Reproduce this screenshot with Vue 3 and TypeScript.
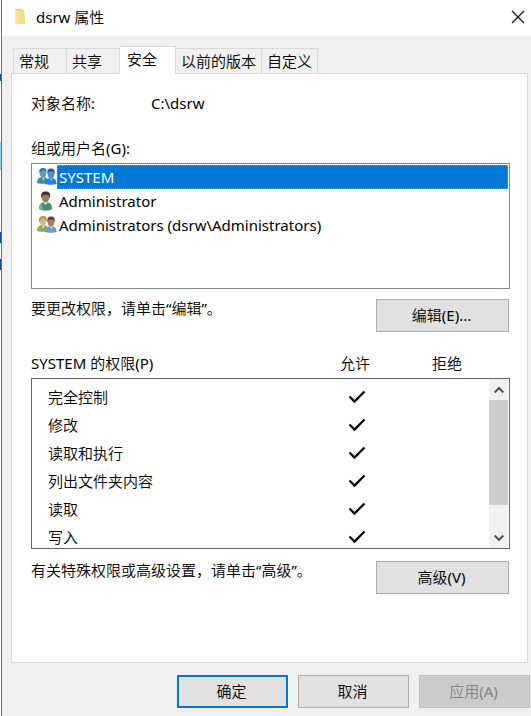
<script setup lang="ts">
import { ref } from 'vue'

interface Principal {
  name: string
  kind: 'group' | 'user' | 'mixed'
}

interface Permission {
  name: string
  allow: boolean
  deny: boolean
}

const tabs: string[] = ['常规', '共享', '安全', '以前的版本', '自定义']
const activeTab = ref('安全')

const principals: Principal[] = [
  { name: 'SYSTEM', kind: 'group' },
  { name: 'Administrator', kind: 'user' },
  { name: 'Administrators (dsrw\\Administrators)', kind: 'mixed' },
]
const selected = ref('SYSTEM')

const permissions: Permission[] = ['完全控制', '修改', '读取和执行', '列出文件夹内容', '读取', '写入'].map(
  (name) => ({ name, allow: true, deny: false }),
)
</script>

<template>
  <div class="desktop">
    <div class="behind"></div>
    <main class="window">
      <header class="titlebar">
        <svg class="folder" width="12" height="18" viewBox="0 0 12 18" aria-hidden="true">
          <path d="M1 1h6l1 1h2v13H1z" fill="#f3cf6b" />
          <path d="M1 1l4 2v13l-4-1z" fill="#fbe29a" />
          <path d="M5 4l2-1h3l1 8v5H5z" fill="#f8dc86" />
        </svg>
        <h1 class="title">dsrw 属性</h1>
        <button class="close" type="button" aria-label="关闭">
          <svg width="14" height="14" viewBox="0 0 14 14" aria-hidden="true">
            <path d="M1 1l12 12M13 1L1 13" stroke="#111" stroke-width="1.2" fill="none" />
          </svg>
        </button>
      </header>

      <nav class="tabs" role="tablist">
        <button
          v-for="tab in tabs"
          :key="tab"
          type="button"
          role="tab"
          class="tab"
          :class="{ active: tab === activeTab }"
          :aria-selected="tab === activeTab"
          @click="activeTab = tab"
        >{{ tab }}</button>
      </nav>

      <section class="panel">
        <div class="object">
          <span class="object-label">对象名称:</span>
          <span>C:\dsrw</span>
        </div>

        <div id="principals-label" class="caption">组或用户名(G):</div>
        <div class="principals" role="listbox" aria-labelledby="principals-label">
          <button
            v-for="p in principals"
            :key="p.name"
            type="button"
            role="option"
            class="principal"
            :class="{ selected: p.name === selected }"
            :aria-selected="p.name === selected"
            @click="selected = p.name"
          >
            <svg v-if="p.kind === 'group'" class="person" width="20" height="20" viewBox="0 0 20 20" aria-hidden="true">
              <path d="M0 16c0-4 2-6 6-6s5 2 5 6c-2 1-9 1-11 0z" fill="#3f8f8e" />
              <ellipse cx="6" cy="6" rx="3.400" ry="4.200" fill="#5b9fc0" />
              <path d="M2.500 6c-.8-3.500 1-5 3.500-5s4 1.500 3.700 4L8 3.500 4.500 4z" fill="#37758f" />
              <path d="M8 17c0-4 2-6 6-6s5.500 2 5.500 6c-2 1-9 1-11.500 0z" fill="#2385df" />
              <ellipse cx="14" cy="7" rx="3.400" ry="4.200" fill="#4d8fd0" />
              <path d="M10.500 7c-.6-4 1-5.500 3.500-5.500S18.500 3 17.500 7L16 4.500l-4 .3z" fill="#285d8c" />
              <path d="M5 10.500l1 3 2-2.500z" fill="#b2dbed" />
              <path d="M13 11.500l1 2.500 2-2.500z" fill="#8fc5f7" />
            </svg>
            <svg v-else-if="p.kind === 'user'" class="person" width="20" height="20" viewBox="0 0 20 20" aria-hidden="true">
              <path d="M2 18c0-5 2-7 6-7 5 0 7 2 7 7-3 2-10 2-13 0z" fill="#3f9167" />
              <path d="M6 11l2.500 3L11 11l-2-2z" fill="#e4ede2" />
              <ellipse cx="8.500" cy="6.500" rx="3.800" ry="5" fill="#a7775c" />
              <path d="M4.500 7C3.500 2.500 5 .5 8.500.5S14 2 12.800 7.500L11.500 4 6 4z" fill="#40312c" />
              <path d="M2 18c0-4 1-5 3-6l1 7z" fill="#70b489" />
            </svg>
            <svg v-else class="person" width="20" height="20" viewBox="0 0 20 20" aria-hidden="true">
              <path d="M0 16c0-4 2-6 6-6s5 2 5 6c-2 1-9 1-11 0z" fill="#8aaf4b" />
              <ellipse cx="6" cy="6" rx="3.400" ry="4.200" fill="#dfb98d" />
              <path d="M2 8C1.500 3 2.500 1 6 1s4.300 2 3.700 5L7.500 3.500 4.500 4z" fill="#b79d54" />
              <path d="M8 17c0-4 2-6 6-6s5.500 2 5.500 6c-2 1-9 1-11.500 0z" fill="#7299bd" />
              <ellipse cx="14" cy="7" rx="3.400" ry="4.200" fill="#ae7e66" />
              <path d="M10.500 7c-.6-4 1-5.500 3.500-5.500S18.500 3 17.500 7L16 4.500l-4 .3z" fill="#584139" />
              <path d="M5 10.500l1 3 2-2.500z" fill="#e4edc9" />
              <path d="M13 11.500l1 2.500 2-2.500z" fill="#dce9f4" />
            </svg>
            <span class="principal-name">{{ p.name }}</span>
          </button>
        </div>

        <div class="action">
          <p class="hint">要更改权限，请单击“编辑”。</p>
          <button class="btn wide" type="button">编辑(E)...</button>
        </div>

        <div class="perm-head">
          <span id="perm-label">{{ selected }} 的权限(P)</span>
          <span class="col">允许</span>
          <span class="col">拒绝</span>
        </div>
        <div class="perm-box">
          <table class="perms" aria-labelledby="perm-label">
            <tbody>
              <tr v-for="perm in permissions" :key="perm.name">
                <th scope="row">{{ perm.name }}</th>
                <td v-for="(on, i) in [perm.allow, perm.deny]" :key="i">
                  <svg v-if="on" class="check" width="18" height="14" viewBox="0 0 18 14" role="img" aria-label="✓">
                    <path d="M1.500 6.500L6.500 11.500L16.500 1.500" fill="none" stroke="#000" stroke-width="2.300" />
                  </svg>
                </td>
              </tr>
            </tbody>
          </table>
          <div class="scrollbar">
            <button class="arrow" type="button" aria-label="向上滚动">
              <svg width="10" height="8" viewBox="0 0 10 8" aria-hidden="true">
                <path d="M.7 6.500L5 2l4.300 4.500" fill="none" stroke="#505050" stroke-width="2" />
              </svg>
            </button>
            <div class="track"><div class="thumb"></div></div>
            <button class="arrow" type="button" aria-label="向下滚动">
              <svg width="10" height="8" viewBox="0 0 10 8" aria-hidden="true">
                <path d="M.7 1.500L5 6l4.300-4.500" fill="none" stroke="#505050" stroke-width="2" />
              </svg>
            </button>
          </div>
        </div>

        <div class="action advanced">
          <p class="hint">有关特殊权限或高级设置，请单击“高级”。</p>
          <button class="btn wide" type="button">高级(V)</button>
        </div>
      </section>

      <footer class="footer">
        <button class="btn primary" type="button">确定</button>
        <button class="btn" type="button">取消</button>
        <button class="btn" type="button" disabled>应用(A)</button>
      </footer>
    </main>
  </div>
</template>

<style>
body {
  margin: 0;
  background: #f0f0f0;
}
</style>

<style scoped>
.desktop {
  display: flex;
  min-height: 100vh;
  overflow: hidden;
  font: 15px/18px "Noto Sans", "Noto Sans CJK SC DemiLight", "Noto Sans CJK SC", sans-serif;
  color: #000;
}
.desktop *,
.desktop {
  box-sizing: border-box;
}
button {
  font: inherit;
  color: inherit;
  padding: 0;
  border: 0;
  background: none;
}
.behind {
  flex: 0 0 1px;
  background: linear-gradient(
    #fff 74px, #104a9a 74px 81px, #fff 81px 142px, #9bd0ee 142px 170px, #fff 170px 232px,
    #0b49a0 232px 243px, #fff 243px 259px, #0b49a0 259px 270px, #fff 270px
  );
}
.window {
  flex: 1;
  min-width: 0;
  display: flex;
  flex-direction: column;
  border-left: 1px solid #3a7ca5;
  background: #f0f0f0;
}
.titlebar {
  display: flex;
  align-items: center;
  height: 36px;
  padding: 0 6px 2px 12px;
  background: #fff;
}
.title {
  flex: 1;
  margin: 0 0 0 10px;
  font: inherit;
}
.close {
  display: flex;
}
.tabs {
  display: flex;
  align-items: flex-end;
  height: 37px;
  padding-left: 11px;
}
.tab {
  height: 25px;
  padding: 0 5px;
  border: 1px solid #dadada;
  border-bottom: 0;
  border-left-width: 0;
  white-space: nowrap;
  text-align: left;
  min-width: 53px;
}
.tab:first-child {
  min-width: 54px;
  border-left-width: 1px;
}
.tab.active {
  z-index: 1;
  height: 28px;
  min-width: 56px;
  margin-bottom: -1px;
  padding: 0 7px 3px;
  background: #fff;
}
.panel {
  flex: 1;
  margin: 0 3px 0 9px;
  padding: 20px 17px 0 19px;
  background: #fff;
  border: 1px solid #d9d9d9;
}
.object {
  display: flex;
}
.object-label {
  width: 120px;
}
.caption {
  margin-top: 27px;
}
.principals {
  height: 126px;
  margin-top: 6px;
  padding: 1px;
  border: 1px solid #828790;
}
.principal {
  display: flex;
  align-items: center;
  width: 100%;
  height: 24px;
  padding-left: 4px;
  text-align: left;
}
.person {
  flex: none;
}
.principal-name {
  flex: 1;
  height: 24px;
  padding-left: 1px;
  border: 1px solid transparent;
  line-height: 22px;
}
.selected .principal-name {
  background: #0078d7;
  border: 1px dotted #c88a4a;
  color: #fff;
}
.action {
  display: flex;
  justify-content: space-between;
  align-items: flex-start;
  margin-top: 10px;
}
.hint {
  margin: 0;
}
.btn {
  width: 111px;
  height: 33px;
  padding: 0 2px 2px 0;
  background: #e1e1e1;
  border: 1px solid #adadad;
}
.btn.wide {
  width: 133px;
  margin-right: 1px;
}
.btn.primary {
  border: 2px solid #0078d7;
}
.btn:disabled {
  background: #ccc;
  border-color: #bfbfbf;
  color: #838383;
}
.perm-head {
  display: grid;
  grid-template-columns: 1fr 92px 92px;
  margin-top: 22px;
  padding-right: 17px;
}
.col {
  text-align: center;
}
.perm-box {
  display: flex;
  height: 171px;
  margin-top: 6px;
  padding-right: 1px;
  border: 1px solid #646464;
  overflow: hidden;
}
.perms {
  flex: 1;
  align-self: flex-start;
  margin-top: 4px;
  border-collapse: collapse;
  table-layout: fixed;
}
.perms th {
  height: 28px;
  padding: 0 0 0 16px;
  font-weight: inherit;
  text-align: left;
}
.perms td {
  width: 88px;
  padding: 0;
  text-align: center;
}
.check {
  display: block;
  margin: 0 auto;
}
.scrollbar {
  display: flex;
  flex-direction: column;
  width: 19px;
  background: #f0f0f0;
}
.arrow {
  display: flex;
  align-items: center;
  justify-content: center;
  height: 21px;
}
.track {
  flex: 1;
}
.thumb {
  height: 105px;
  background: #cdcdcd;
}
.advanced {
  margin-top: 12px;
}
.footer {
  display: flex;
  justify-content: flex-end;
  gap: 10px;
  padding: 12px 1px 8px;
}
</style>
